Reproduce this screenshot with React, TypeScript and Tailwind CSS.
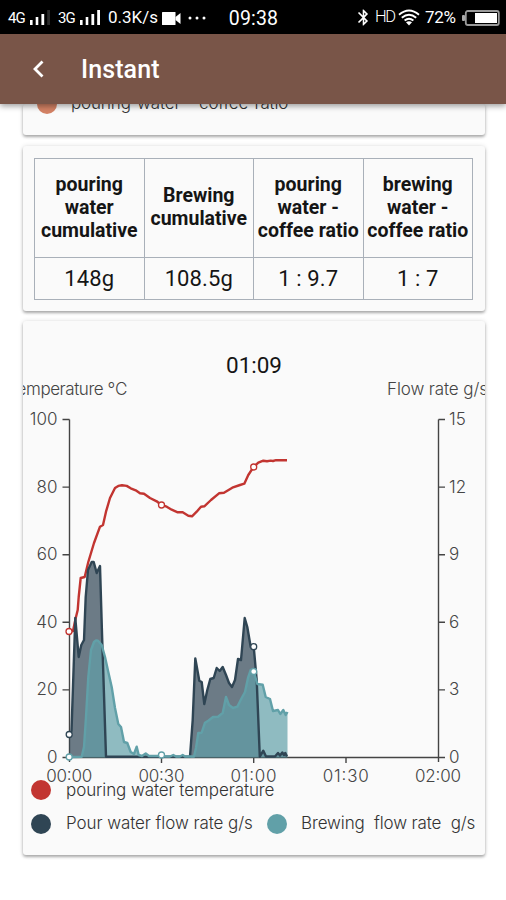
import React from 'react';
import { MdBluetooth } from 'react-icons/md';

const TEMPERATURE =
    '69,631.5 73,631 75.5,619 77.7,610 78.7,597 80.7,578 84.7,577 88.3,562 94,543 100,526.7 103,525 106,511.7 110,498 115,488 118.3,485.9 122,485.3 126.7,485.9 130.7,488.3 135.7,490.3 140,493.3 144,493.7 150,498 156.7,501.3 161.3,505 166.7,506.7 171.7,509.7 177.7,512.3 182.7,512.3 188.3,515.7 192,516.3 196.7,511.7 201,506.7 204.3,506.3 211,500 219,493.3 224,492.7 232.3,487.7 240,485 244.3,483.7 248.3,475 253.3,467.3 258.3,462.7 263.3,460.7 267,461.3 270.7,460.6 273,461 276,460.2 287,460.3';

const POUR =
    '69.5,734.5 71.5,731 75.3,618 78.7,657 81.3,645 84,640 85.7,597 88,570 91.7,562 93.7,562 96.7,573 100,566 102,633 106,756.7 190,756.7 192.7,720 195.3,658.5 199.3,680.7 201.7,682 204.3,704 207.3,690 210.3,679 213.7,678 216.7,668 219.7,671 222.7,667 226,675 229,683 232,687 235,680 238,659 241,660 244.7,618 247.3,627 250.7,647 253.7,646.7 256.7,680 259.8,756.7 263.3,750.7 266,756.5 275,756.5 278,753 280,755.5 282.3,752.5 284,755 285.3,753 287,756.5';

const BREW =
    '69.5,757 81.7,756.7 84,747 86,717 88.3,677 91,650 94,642 96,640.4 98,640.7 101.7,645 105,657 108.3,672 111.7,687 115,708 118.3,724 121,727 124,742 127.3,743 130.7,752 134,754 136.7,746.7 138.7,755 142,756 145.7,753.5 149,756 158,756 161.5,754.5 165,756.5 170,756.5 173.3,755 176,756.5 180,756.5 182.7,755 185,756.5 194,756.5 196,748 198.3,733 201.7,732.7 205,722.7 208.3,720.7 213,717 218,716.7 222.7,713 226,697 229,705 233,708 237.3,706.7 241.7,698 245,692 248,678 250.7,670 253.7,671.5 257.3,684 262.7,684.7 265.7,697 270,699 273,711 278,710 280.3,714 283.3,710 285.7,715 287.5,712';

const MARKERS = [
    { color: '#c23531', points: [[69, 631.5], [161.5, 505], [253.7, 467]] },
    { color: '#2f4554', points: [[69.2, 734.5], [253.7, 646.7]] },
    { color: '#61a0a8', points: [[69.2, 757], [161.5, 755], [253.7, 671.5]] },
];

const COLUMNS = [
    { title: ['pouring', 'water', 'cumulative'], value: '148g' },
    { title: ['Brewing', 'cumulative'], value: '108.5g' },
    { title: ['pouring', 'water -', 'coffee ratio'], value: '1 : 9.7' },
    { title: ['brewing', 'water -', 'coffee ratio'], value: '1 : 7' },
];

function Signal({ dim }: { dim?: boolean }) {
    return (
        <svg width="21" height="16" viewBox="0 0 21 16" fill="#fff">
            <rect x="0" y="10" width="2.6" height="5" />
            <rect x="5.7" y="7" width="2.6" height="8" />
            <rect x="11.4" y="4" width="2.8" height="11" />
            <rect x="17.2" y="0" width="2.8" height="15" fill={dim ? '#2a2a2a' : '#fff'} />
        </svg>
    );
}

function StatusBar() {
    return (
        <div className="relative h-[34px] bg-black text-white font-['Roboto',sans-serif]">
            <div className="flex h-full items-center pl-2 pt-0.5">
                <span className="w-[22px] text-[15px] tracking-[-1px]">4G</span>
                <Signal dim />
                <span className="ml-[7px] w-[22px] text-[15px] tracking-[-1px]">3G</span>
                <Signal />
                <span className="ml-[7px] w-[53px] whitespace-nowrap text-[17px]">0.3K/s</span>
                <svg className="ml-px" width="20" height="13" viewBox="0 0 20 13" fill="#fff">
                    <rect width="13.5" height="13" rx="0.5" />
                    <path d="M13.5 5 18.5 1V12L13.5 8Z" />
                </svg>
                <svg className="ml-[6px]" width="18" height="4" viewBox="0 0 18 4" fill="#fff">
                    <circle cx="2" cy="2" r="1.5" />
                    <circle cx="9" cy="2" r="1.5" />
                    <circle cx="16" cy="2" r="1.5" />
                </svg>
            </div>
            <div className="absolute inset-0 flex items-center justify-center pl-px pt-[3px] text-[19.5px] tracking-[0.2px]">09:38</div>
            <div className="absolute inset-y-0 right-0 flex items-center pr-[6px] pt-px">
                <MdBluetooth className="h-[19px] w-[19px]" />
                <span className="ml-[2px] w-[23px] text-[16.5px] font-light tracking-[-1.4px]">HD</span>
                <svg width="22" height="17" viewBox="0 0 22 17" fill="none" stroke="#fff" strokeWidth="1.9">
                    <path d="M1 5.8Q11-2.8 21 5.8M3.8 8.8Q11 2.8 18.2 8.8M6.6 11.6Q11 8 15.4 11.6" />
                    <path d="M8 13.3Q11 11 14 13.3L11 16.5Z" fill="#fff" stroke="none" />
                </svg>
                <span className="ml-[5px] w-[35px] text-[17px] tracking-[-0.3px]">72%</span>
                <svg className="ml-[2px]" width="38" height="16" viewBox="0 0 38 16">
                    <rect x="0" y="5" width="3" height="6" rx="1" fill="#aaa" />
                    <rect x="3.8" y="1" width="33" height="14" rx="2" fill="none" stroke="#9a9a9a" strokeWidth="1.8" />
                    <rect x="13" y="3" width="22" height="10" fill="#fff" />
                </svg>
            </div>
        </div>
    );
}

function LegendItem({ dot, text, className }: { dot: string; text: string; className: string }) {
    return (
        <div className="flex h-5 items-center">
            <span className={`h-5 w-5 shrink-0 rounded-full ${dot}`}></span>
            <span className={`whitespace-pre text-[17px] font-light text-[#333] ${className}`}>{text}</span>
        </div>
    );
}

function Chart() {
    return (
        <svg
            className="block font-['Inter',sans-serif] font-light"
            width="462"
            height="400"
            viewBox="23 380 462 400"
            overflow="visible"
            fill="#444"
            fontSize="17"
        >
            <text x="127.5" y="395" textAnchor="end" textLength="120">Temperature ℃</text>
            <text x="387" y="395" textLength="101">Flow rate g/s</text>

            {/* Axes */}
            <g stroke="#444" strokeWidth="1.4">
                <path d="M69.5 419.5V762M438.5 419.5V762M62.5 757.5H445" fill="none" />
                {[0, 1, 2, 3, 4].map((i) => (
                    <path key={i} d={`M62.5 ${419.5 + i * 67.6}H69.5M438.5 ${419.5 + i * 67.6}H445`} />
                ))}
                <path d="M161.5 757.5V763M253.7 757.5V763M346 757.5V763" />
            </g>
            {[100, 80, 60, 40, 20, 0].map((n, i) => (
                <text key={n} x="57.5" y={425 + i * 67.6} textAnchor="end">{n}</text>
            ))}
            {[15, 12, 9, 6, 3, 0].map((n, i) => (
                <text key={n} x="449" y={425 + i * 67.6}>{n}</text>
            ))}
            {['00:00', '00:30', '01:00', '01:30', '02:00'].map((t, i) => (
                <text key={t} x={69.2 + i * 92.2} y="782" textAnchor="middle" textLength="46">{t}</text>
            ))}

            {/* Series */}
            <g strokeWidth="2.4" strokeLinejoin="round" fill="none">
                <polygon points={`${POUR} 287,757.5 69.5,757.5`} fill="#2f4554" fillOpacity="0.7" />
                <polygon points={`${BREW} 287.5,757.5 69.5,757.5`} fill="#61a0a8" fillOpacity="0.7" />
                <polyline points={TEMPERATURE} stroke="#c23531" />
                <polyline points={POUR} stroke="#2f4554" />
                <polyline points={BREW} stroke="#61a0a8" />
            </g>
            {MARKERS.map((m) =>
                m.points.map(([x, y]) => (
                    <circle key={`${x}-${y}`} cx={x} cy={y} r="3" fill="#fff" stroke={m.color} strokeWidth="1.3" />
                ))
            )}
        </svg>
    );
}

const CARD = 'ml-[23px] w-[462px] overflow-hidden rounded-[3px] bg-[#fafafa] shadow-[0_2px_3px_rgba(0,0,0,0.3),0_0_5px_rgba(0,0,0,0.12)]';

export default function App() {
    return (
        <div className="h-[900px] w-[506px] overflow-hidden bg-white font-['Roboto',sans-serif] text-[#151515]">
            <StatusBar />
            <header className="relative z-10 flex h-[70px] items-center bg-[#795548] text-white shadow-[0_2px_6px_rgba(0,0,0,0.4)]">
                <svg className="ml-[32px]" width="12" height="18" viewBox="0 0 12 18" fill="none" stroke="#fff" strokeWidth="2.8">
                    <path d="M10.5 1.5 3 9 10.5 16.5" />
                </svg>
                <h1 className="ml-[37px] pt-0.5 text-[25px] font-medium tracking-[0.1px]">Instant</h1>
            </header>

            <div className={`${CARD} h-[31px] pl-[14px] font-['Inter',sans-serif]`}>
                <div className="-mt-[10px]">
                    <LegendItem dot="bg-[#d48265]" text="pouring water   coffee ratio" className="ml-[14px] tracking-[-0.15px] [word-spacing:1.6px]" />
                </div>
            </div>

            {/* Totals */}
            <div className={`${CARD} mt-[11px] h-[165px] px-[11px] pt-[12px]`}>
                <table className="h-[142px] w-[439px] table-fixed border-collapse text-center">
                    <thead>
                        <tr className="h-[99px]">
                            {COLUMNS.map((c, i) => (
                                <th key={i} className="border border-[#a9b0b9] p-0 pb-0.5 text-[19.5px] font-bold leading-[23px]">
                                    {c.title.map((line) => (
                                        <div key={line} className="whitespace-nowrap">{line}</div>
                                    ))}
                                </th>
                            ))}
                        </tr>
                    </thead>
                    <tbody>
                        <tr>
                            {COLUMNS.map((c, i) => (
                                <td key={i} className="border border-[#a9b0b9] p-0 text-[22px] leading-6 tracking-[0.1px]">{c.value}</td>
                            ))}
                        </tr>
                    </tbody>
                </table>
            </div>

            {/* Brewing chart */}
            <div className={`${CARD} mt-[10px] h-[534px] font-['Inter',sans-serif]`}>
                <div className="flex h-[59px] items-end justify-center font-['Roboto',sans-serif] text-[22.5px] leading-[30px]">01:09</div>
                <Chart />
                <div className="flex flex-col gap-[14px] pl-2">
                    <LegendItem dot="bg-[#c23531]" text="pouring water temperature" className="ml-[15px] pt-px tracking-[-0.08px]" />
                    <div className="flex">
                        <LegendItem dot="bg-[#2f4554]" text="Pour water flow rate g/s" className="ml-[15px] w-[201px] tracking-[-0.08px]" />
                        <LegendItem dot="bg-[#61a0a8]" text="Brewing  flow rate  g/s" className="ml-[14px] tracking-[-0.12px]" />
                    </div>
                </div>
            </div>
        </div>
    );
}
